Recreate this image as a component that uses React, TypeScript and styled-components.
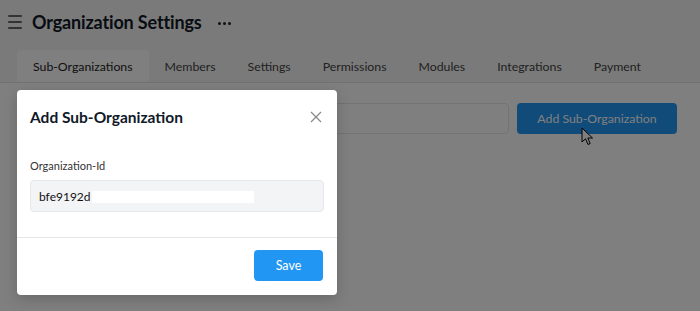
import styled, { createGlobalStyle } from "styled-components";

const GlobalStyle = createGlobalStyle`
  * { box-sizing: border-box; }
  body {
    margin: 0;
    font-family: Lato, "Liberation Sans", sans-serif;
    background: #ffffff;
    color: #1f2937;
  }
`;

const Page = styled.div`
  width: 700px;
  height: 311px;
  position: relative;
  overflow: hidden;
  background: #ffffff;
`;

const Header = styled.header`
  background: #f4f4f4;
  padding: 0 0 0 17px;
  border-bottom: 1px solid #e2e2e2;
`;

const TitleRow = styled.div`
  display: flex;
  align-items: center;
  height: 44px;
  margin-left: -9px;
`;

const MenuButton = styled.span`
  display: flex;
  flex-direction: column;
  gap: 4px;
  width: 14px;
  margin-right: 10px;

  & i {
    display: block;
    height: 2px;
    background: #666;
    border-radius: 1px;
  }
`;

const Title = styled.h1`
  margin: 0;
  font-size: 18px;
  font-weight: 700;
  color: #111827;
  letter-spacing: -0.15px;
`;

const MoreDots = styled.span`
  display: flex;
  gap: 2px;
  margin-left: 16px;
  margin-top: 3px;

  & i {
    width: 3px;
    height: 3px;
    border-radius: 50%;
    background: #222;
  }
`;

const Tabs = styled.nav`
  display: flex;
  margin-top: 6px;
  height: 32px;
`;

const Tab = styled.span<{ $active?: boolean }>`
  display: flex;
  align-items: center;
  padding: 0 16px;
  font-size: 12.3px;
  color: ${(p) => (p.$active ? "#222" : "#444")};
  background: ${(p) => (p.$active ? "#ffffff" : "transparent")};
  border-radius: 4px 4px 0 0;
`;

const Toolbar = styled.div`
  display: flex;
  gap: 8px;
  padding: 20px 23px 0 17px;
`;

const Search = styled.div`
  flex: 1;
  height: 31px;
  border: 1px solid #e5e7eb;
  border-radius: 4px;
  background: #ffffff;
`;

const PrimaryButton = styled.button`
  height: 31px;
  width: 160px;
  padding: 0;
  border: none;
  border-radius: 4px;
  background: #2196f3;
  color: #ffffff;
  font-family: inherit;
  font-size: 12.3px;
`;

const Backdrop = styled.div`
  position: absolute;
  inset: 0;
  background: rgba(0, 0, 0, 0.5);
`;

const Modal = styled.div`
  position: absolute;
  left: 17px;
  top: 90px;
  width: 320px;
  background: #ffffff;
  border-radius: 4px;
  box-shadow: 0 4px 14px rgba(0, 0, 0, 0.18);
`;

const ModalHeader = styled.div`
  display: flex;
  align-items: center;
  justify-content: space-between;
  padding: 13px 14px 0 13px;
  height: 41px;
`;

const ModalTitle = styled.h2`
  margin: 0;
  font-size: 15.5px;
  font-weight: 700;
  color: #111827;
`;

const CloseButton = styled.span`
  display: flex;
  width: 12px;
  height: 12px;
  margin-right: 1px;
`;

const ModalBody = styled.div`
  padding: 28px 13px 25px 13px;
  border-bottom: 1px solid #e5e7eb;
`;

const Label = styled.label`
  display: block;
  font-size: 11px;
  color: #333;
  margin-bottom: 8px;
`;

const Field = styled.div`
  display: flex;
  align-items: center;
  height: 32px;
  padding: 0 8px;
  background: #f3f4f6;
  border: 1px solid #e5e7eb;
  border-radius: 4px;
  font-size: 12px;
  color: #111;
`;

const Redacted = styled.span`
  display: inline-block;
  width: 162px;
  height: 12px;
  background: #ffffff;
  margin-top: 1px;
  margin-left: 1px;
`;

const ModalFooter = styled.div`
  display: flex;
  justify-content: flex-end;
  padding: 12px 14px 14px;
`;

const SaveButton = styled(PrimaryButton)`
  width: 69px;
  font-size: 12.5px;
`;

const Cursor = styled.svg`
  position: absolute;
  left: 581px;
  top: 127px;
`;

const tabs = [
  "Sub-Organizations",
  "Members",
  "Settings",
  "Permissions",
  "Modules",
  "Integrations",
  "Payment",
];

export default function App() {
  return (
    <Page>
      <GlobalStyle />
      <Header>
        <TitleRow>
          <MenuButton>
            <i />
            <i />
            <i />
          </MenuButton>
          <Title>Organization Settings</Title>
          <MoreDots>
            <i />
            <i />
            <i />
          </MoreDots>
        </TitleRow>
        <Tabs>
          {tabs.map((t, i) => (
            <Tab key={t} $active={i === 0}>
              {t}
            </Tab>
          ))}
        </Tabs>
      </Header>
      <Toolbar>
        <Search />
        <PrimaryButton>Add Sub-Organization</PrimaryButton>
      </Toolbar>
      <Cursor width="14" height="20" viewBox="0 0 14 20">
        <path
          d="M1 1 L1 15 L4.5 11.8 L7 17.5 L9.2 16.5 L6.8 11 L11.5 11 Z"
          fill="#fff"
          stroke="#000"
          strokeWidth="1"
          strokeLinejoin="round"
        />
      </Cursor>
      <Backdrop />
      <Modal>
        <ModalHeader>
          <ModalTitle>Add Sub-Organization</ModalTitle>
          <CloseButton>
            <svg width="12" height="12" viewBox="0 0 12 12">
              <path d="M1 1 L11 11 M11 1 L1 11" stroke="#888" strokeWidth="1.2" />
            </svg>
          </CloseButton>
        </ModalHeader>
        <ModalBody>
          <Label>Organization-Id</Label>
          <Field>
            bfe9192d
            <Redacted />
          </Field>
        </ModalBody>
        <ModalFooter>
          <SaveButton>Save</SaveButton>
        </ModalFooter>
      </Modal>
    </Page>
  );
}
